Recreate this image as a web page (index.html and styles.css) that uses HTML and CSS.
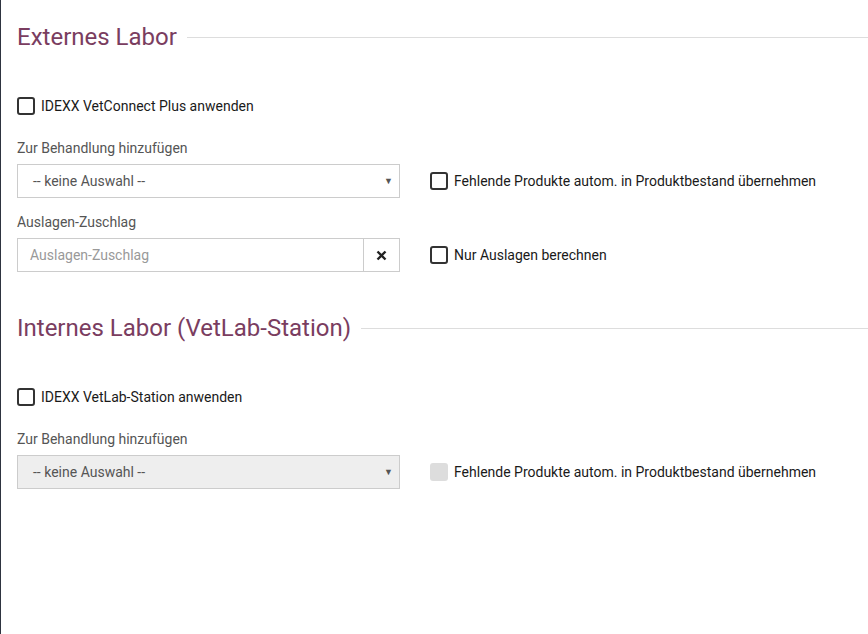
FILE: index.html
```html
<!DOCTYPE html>
<html lang="de">
<head>
<meta charset="utf-8">
<title>Labor</title>
<link rel="stylesheet" href="styles.css">
</head>
<body>
<div class="page">
  <section class="section">
    <div class="section-head">
      <h2 class="section-title">Externes Labor</h2>
      <span class="rule"></span>
    </div>
    <label class="check check-main"><span class="box"></span><span class="check-text">IDEXX VetConnect Plus anwenden</span></label>

    <div class="group first-group">
      <div class="field-label">Zur Behandlung hinzufügen</div>
      <div class="select"><span class="select-value">-- keine Auswahl --</span><span class="caret">▼</span></div>
      <label class="check side"><span class="box"></span><span class="check-text">Fehlende Produkte autom. in Produktbestand übernehmen</span></label>
    </div>

    <div class="group">
      <div class="field-label">Auslagen-Zuschlag</div>
      <div class="input-group">
        <span class="input-field">Auslagen-Zuschlag</span>
        <span class="input-btn"><svg width="11" height="11" viewBox="0 0 11 11"><path d="M1.5 1.5 L9.5 9.5 M9.5 1.5 L1.5 9.5" stroke="#222" stroke-width="2.4" stroke-linecap="butt"/></svg></span>
      </div>
      <label class="check side"><span class="box"></span><span class="check-text">Nur Auslagen berechnen</span></label>
    </div>
  </section>

  <section class="section second">
    <div class="section-head">
      <h2 class="section-title">Internes Labor (VetLab-Station)</h2>
      <span class="rule"></span>
    </div>
    <label class="check check-main"><span class="box"></span><span class="check-text">IDEXX VetLab-Station anwenden</span></label>

    <div class="group first-group">
      <div class="field-label">Zur Behandlung hinzufügen</div>
      <div class="select disabled"><span class="select-value">-- keine Auswahl --</span><span class="caret">▼</span></div>
      <label class="check side"><span class="box box-disabled"></span><span class="check-text">Fehlende Produkte autom. in Produktbestand übernehmen</span></label>
    </div>
  </section>
</div>
</body>
</html>
```

FILE: styles.css
```css
html, body {
  margin: 0;
  padding: 0;
  background: #ffffff;
}
body {
  font-family: Roboto, "Liberation Sans", Arial, sans-serif;
  color: #222;
  height: 634px;
  overflow: hidden;
}
.page {
  border-left: 1px solid #2e3440;
  min-height: 634px;
  box-sizing: border-box;
  padding: 23px 0 0 16px;
}
.section.second {
  margin-top: 42px;
}
.section-head {
  display: flex;
  align-items: center;
  gap: 10px;
  height: 28px;
}
.section-title {
  margin: 0;
  font-size: 24px;
  line-height: 28px;
  font-weight: 400;
  color: #7a3d60;
  white-space: nowrap;
}
.rule {
  flex: 1;
  height: 1px;
  background: #dddddd;
}
.check {
  display: flex;
  align-items: center;
  gap: 6px;
  height: 20px;
  font-size: 14px;
  font-weight: 400;
  color: #1a1a1a;
  white-space: nowrap;
}
.check-main {
  margin-top: 45px;
}
.box {
  width: 18px;
  height: 18px;
  box-sizing: border-box;
  border: 2px solid #333;
  border-radius: 3px;
  flex: none;
}
.box-disabled {
  border: none;
  background: #dddddd;
}
.group {
  display: grid;
  grid-template-columns: 383px auto;
  grid-template-rows: 20px 34px;
  column-gap: 30px;
  row-gap: 6px;
  margin-top: 14px;
}
.group.first-group {
  margin-top: 22px;
}
.field-label {
  grid-column: 1;
  grid-row: 1;
  font-size: 14px;
  line-height: 20px;
  font-weight: 400;
  color: #555;
}
.select, .input-group {
  grid-column: 1;
  grid-row: 2;
}
.side {
  grid-column: 2;
  grid-row: 2;
  align-self: center;
}
.select {
  display: flex;
  align-items: center;
  justify-content: space-between;
  box-sizing: border-box;
  height: 34px;
  border: 1px solid #cccccc;
  background: #fff;
  padding: 0 6px 0 15px;
  font-size: 14px;
  color: #555;
}
.select.disabled {
  background: #eeeeee;
}
.caret {
  font-size: 9px;
  color: #555;
}
.input-group {
  display: flex;
  height: 34px;
  box-sizing: border-box;
  border: 1px solid #cccccc;
}
.input-field {
  flex: 1;
  display: flex;
  align-items: center;
  padding-left: 12px;
  font-size: 14px;
  color: #999;
}
.input-btn {
  width: 35px;
  flex: none;
  border-left: 1px solid #cccccc;
  display: flex;
  align-items: center;
  justify-content: center;
}
```
